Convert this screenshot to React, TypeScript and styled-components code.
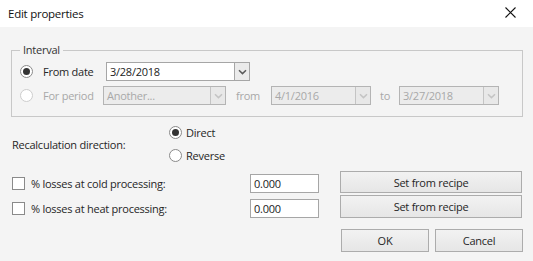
import React from 'react';
import styled, {createGlobalStyle} from 'styled-components';

const FONT = `'Open Sans', 'Noto Sans', sans-serif`;

const GlobalStyle = createGlobalStyle`
  html, body {
    margin: 0;
    padding: 0;
    background: #f4f4f4;
  }
  * {
    box-sizing: border-box;
  }
`;

const Chevron = ({disabled}: {disabled?: boolean}) => (
  <svg width="9" height="6" viewBox="0 0 9 6">
    <path
      d="M1 1.2 L4.5 4.6 L8 1.2"
      fill="none"
      stroke={disabled ? '#c4c4c4' : '#5a5a5a'}
      strokeWidth="1.5"
    />
  </svg>
);

const CloseIcon = () => (
  <svg width="11" height="11" viewBox="0 0 11 11">
    <path d="M0.5 0.5 L10.5 10.5 M10.5 0.5 L0.5 10.5" stroke="#111" strokeWidth="1.1" />
  </svg>
);

const App = () => {
  return (
    <Dialog>
      <GlobalStyle />
      <TitleBar>
        <Title>Edit properties</Title>
        <CloseButton>
          <CloseIcon />
        </CloseButton>
      </TitleBar>

      <Body>
        <Group>
          <Legend>Interval</Legend>
          <GroupRow>
            <Radio checked />
            <OptionLabel width={63}>From date</OptionLabel>
            <Combo width={144} value="3/28/2018" />
          </GroupRow>
          <GroupRow>
            <Radio disabled />
            <OptionLabel width={60} disabled>
              For period
            </OptionLabel>
            <Combo width={123} value="Another..." disabled />
            <Word gap={10}>from</Word>
            <Combo width={100} value="4/1/2016" disabled gap={11} />
            <Word gap={9}>to</Word>
            <Combo width={100} value="3/27/2018" disabled gap={9} />
          </GroupRow>
        </Group>

        <Direction>
          <DirectionLabel>Recalculation direction:</DirectionLabel>
          <RadioColumn>
            <RadioOption>
              <Radio checked />
              <span>Direct</span>
            </RadioOption>
            <RadioOption>
              <Radio />
              <span>Reverse</span>
            </RadioOption>
          </RadioColumn>
        </Direction>

        <LossRow first>
          <LossLabel>
            <Check />
            <span>% losses at cold processing:</span>
          </LossLabel>
          <NumberBox>0.000</NumberBox>
          <Button width={182} height={22}>
            Set from recipe
          </Button>
        </LossRow>
        <LossRow>
          <LossLabel>
            <Check />
            <span>% losses at heat processing:</span>
          </LossLabel>
          <NumberBox>0.000</NumberBox>
          <Button width={182} height={23}>
            Set from recipe
          </Button>
        </LossRow>

        <Footer>
          <Button width={88} height={23}>
            OK
          </Button>
          <Button width={88} height={23}>
            Cancel
          </Button>
        </Footer>
      </Body>
    </Dialog>
  );
};

const Combo = ({
  width,
  value,
  disabled,
  gap,
}: {
  width: number;
  value: string;
  disabled?: boolean;
  gap?: number;
}) => (
  <ComboBox width={width} disabled={disabled} gap={gap}>
    <ComboText disabled={disabled}>{value}</ComboText>
    <ComboButton disabled={disabled}>
      <Chevron disabled={disabled} />
    </ComboButton>
  </ComboBox>
);

const Dialog = styled.div`
  width: 533px;
  height: 261px;
  display: flex;
  flex-direction: column;
  font-family: ${FONT};
  font-size: 11px;
  letter-spacing: -0.25px;
  color: #262626;
  background: #f4f4f4;
`;

const TitleBar = styled.div`
  height: 27px;
  background: #fff;
  display: flex;
  align-items: center;
  justify-content: space-between;
  padding: 0 17px 1px 8px;
`;

const Title = styled.div`
  font-size: 11.5px;
  color: #111;
`;

const CloseButton = styled.div`
  display: flex;
  margin-top: -1px;
`;

const Body = styled.div`
  flex: 1;
  display: flex;
  flex-direction: column;
  padding: 15px 10px 0 11px;
`;

const Group = styled.fieldset`
  margin: 0;
  padding: 4px 0 11px 8px;
  border: 1px solid #c8c8c8;
  display: flex;
  flex-direction: column;
  gap: 5px;
`;

const Legend = styled.legend`
  padding: 0 3px;
  line-height: 16px;
  color: #333;
`;

const GroupRow = styled.div`
  display: flex;
  align-items: center;
  height: 19px;
`;

const Radio = styled.span<{checked?: boolean; disabled?: boolean}>`
  width: 13px;
  height: 13px;
  flex: none;
  border-radius: 50%;
  border: 1px solid ${({disabled}) => (disabled ? '#cdcdcd' : '#8a8a8a')};
  background: #fff;
  display: flex;
  align-items: center;
  justify-content: center;

  &::after {
    content: '';
    display: ${({checked}) => (checked ? 'block' : 'none')};
    width: 7px;
    height: 7px;
    border-radius: 50%;
    background: #333;
  }
`;

const OptionLabel = styled.span<{width: number; disabled?: boolean}>`
  width: ${({width}) => width}px;
  padding-left: 10px;
  box-sizing: content-box;
  color: ${({disabled}) => (disabled ? '#a8a8a8' : '#262626')};
  white-space: nowrap;
`;

const Word = styled.span<{gap: number}>`
  margin-left: ${({gap}) => gap}px;
  color: #a8a8a8;
`;

const ComboBox = styled.div<{width: number; disabled?: boolean; gap?: number}>`
  width: ${({width}) => width}px;
  height: 19px;
  margin-left: ${({gap}) => gap ?? 0}px;
  display: flex;
  border: 1px solid ${({disabled}) => (disabled ? '#b4b4b4' : '#a6a6a6')};
  background: ${({disabled}) => (disabled ? '#ececec' : '#fff')};
`;

const ComboText = styled.div<{disabled?: boolean}>`
  flex: 1;
  padding-left: 3px;
  line-height: 17px;
  color: ${({disabled}) => (disabled ? '#a8a8a8' : '#222')};
  background: ${({disabled}) => (disabled ? 'transparent' : '#fff')};
  white-space: nowrap;
  overflow: hidden;
`;

const ComboButton = styled.div<{disabled?: boolean}>`
  width: 15px;
  flex: none;
  border-left: 1px solid ${({disabled}) => (disabled ? '#c4c4c4' : '#a6a6a6')};
  background: ${({disabled}) => (disabled ? '#e8e8e8' : '#ebebeb')};
  display: flex;
  align-items: center;
  justify-content: center;
`;

const Direction = styled.div`
  display: flex;
  align-items: center;
  margin-top: 4px;
  padding-left: 1px;
`;

const DirectionLabel = styled.div`
  width: 157px;
`;

const RadioColumn = styled.div`
  display: flex;
  flex-direction: column;
`;

const RadioOption = styled.label`
  height: 23px;
  display: flex;
  align-items: center;
  gap: 4px;
`;

const LossRow = styled.div<{first?: boolean}>`
  display: flex;
  align-items: flex-end;
  margin-top: ${({first}) => (first ? 4 : 2)}px;
`;

const LossLabel = styled.div`
  width: 239px;
  height: 19px;
  padding-left: 1px;
  display: flex;
  align-items: center;
  gap: 6px;
`;

const Check = styled.span`
  width: 13px;
  height: 13px;
  flex: none;
  border: 1px solid #8a8a8a;
  background: #fff;
`;

const NumberBox = styled.div`
  width: 69px;
  height: 19px;
  border: 1px solid #a6a6a6;
  background: #fff;
  padding-left: 3px;
  line-height: 17px;
  color: #222;
  margin-right: 21px;
`;

const Button = styled.button<{width: number; height: number}>`
  width: ${({width}) => width}px;
  height: ${({height}) => height}px;
  border: 1px solid #acacac;
  background: linear-gradient(#f2f2f2, #e6e6e6);
  font-family: ${FONT};
  font-size: 11px;
  letter-spacing: -0.25px;
  color: #262626;
  padding: 0;
`;

const Footer = styled.div`
  display: flex;
  justify-content: flex-end;
  gap: 6px;
  margin-top: 11px;
`;

export default App;
